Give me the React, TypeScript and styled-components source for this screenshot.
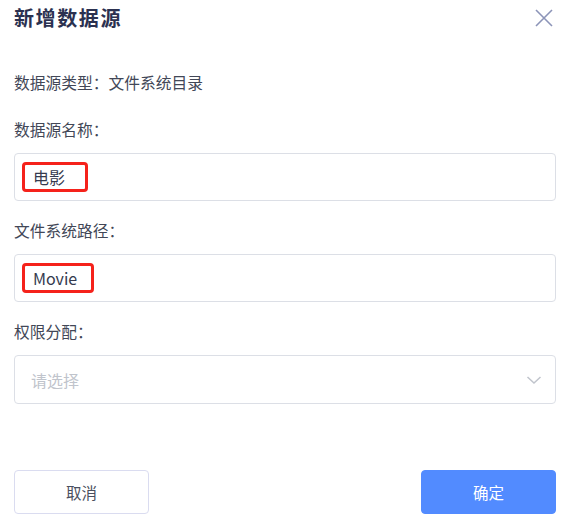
import React, { useState } from 'react';
import styled, { createGlobalStyle } from 'styled-components';

const GlobalStyle = createGlobalStyle`
  html, body {
    margin: 0;
    padding: 0;
    background: #ffffff;
  }
  body {
    font-family: "Noto Sans CJK SC", "Noto Sans", sans-serif;
  }
`;

const Dialog = styled.div`
  width: 569px;
  height: 526px;
  box-sizing: border-box;
  padding: 0 13px 0 14px;
  display: flex;
  flex-direction: column;
`;

const Header = styled.div`
  height: 36px;
  display: flex;
  align-items: center;
  justify-content: space-between;
`;

const Title = styled.h2`
  margin: 0;
  font-size: 20px;
  font-weight: 700;
  letter-spacing: 1.6px;
  color: #2b3150;
  line-height: 36px;
`;

const CloseButton = styled.button`
  border: none;
  background: none;
  padding: 0;
  margin-right: 2px;
  width: 20px;
  height: 20px;
  display: flex;
  align-items: center;
  justify-content: center;
  cursor: pointer;
`;

const Body = styled.div`
  flex: 1;
  display: flex;
  flex-direction: column;
  padding-top: 36px;
`;

const Info = styled.div`
  font-size: 15.75px;
  line-height: 22px;
  color: #424757;
  margin-bottom: 25px;
`;

const Field = styled.div`
  display: flex;
  flex-direction: column;
  gap: 12px;
  margin-bottom: 19px;
`;

const Label = styled.label`
  font-size: 15.75px;
  line-height: 22px;
  color: #424757;
`;

const Box = styled.div<{ $h?: number }>`
  height: ${p => p.$h ?? 48}px;
  box-sizing: border-box;
  border: 1px solid #dcdfe6;
  border-radius: 4px;
  display: flex;
  align-items: center;
  padding: 0 13px 0 7px;
  font-size: 16px;
  color: #353a4e;
`;

const Mark = styled.span<{ $w: number }>`
  display: inline-flex;
  align-items: center;
  box-sizing: border-box;
  width: ${p => p.$w}px;
  height: 30px;
  padding-left: 8px;
  border: 3px solid #f5221b;
  border-radius: 4px;
`;

const Placeholder = styled.span`
  flex: 1;
  padding-left: 9px;
  color: #c0c4cc;
  font-size: 16px;
`;

const Footer = styled.div`
  display: flex;
  justify-content: space-between;
  padding-bottom: 12px;
`;

const Button = styled.button<{ $primary?: boolean }>`
  width: 135px;
  height: 44px;
  border-radius: 4px;
  font-family: inherit;
  font-size: 15.5px;
  cursor: pointer;
  border: 1px solid ${p => (p.$primary ? '#528bff' : '#dadcf0')};
  background: ${p => (p.$primary ? '#528bff' : '#ffffff')};
  color: ${p => (p.$primary ? '#ffffff' : '#4a4f5e')};
`;

const Spacer = styled.div`
  flex: 1;
`;

export default function App() {
  const [open] = useState(true);
  if (!open) return null;
  return (
    <>
      <GlobalStyle />
      <Dialog>
        <Header>
          <Title>新增数据源</Title>
          <CloseButton aria-label="close">
            <svg width="18" height="18" viewBox="0 0 18 18">
              <path d="M1 1L17 17M17 1L1 17" stroke="#8c94b8" strokeWidth="1.6" />
            </svg>
          </CloseButton>
        </Header>
        <Body>
          <Info>数据源类型：文件系统目录</Info>
          <Field>
            <Label>数据源名称：</Label>
            <Box>
              <Mark $w={66}>电影</Mark>
            </Box>
          </Field>
          <Field>
            <Label>文件系统路径：</Label>
            <Box>
              <Mark $w={72}>Movie</Mark>
            </Box>
          </Field>
          <Field>
            <Label>权限分配：</Label>
            <Box $h={49}>
              <Placeholder>请选择</Placeholder>
              <svg width="16" height="10" viewBox="0 0 16 10">
                <path d="M1.5 2L8 8L14.5 2" fill="none" stroke="#c0c4cc" strokeWidth="1.5" />
              </svg>
            </Box>
          </Field>
          <Spacer />
          <Footer>
            <Button>取消</Button>
            <Button $primary>确定</Button>
          </Footer>
        </Body>
      </Dialog>
    </>
  );
}
